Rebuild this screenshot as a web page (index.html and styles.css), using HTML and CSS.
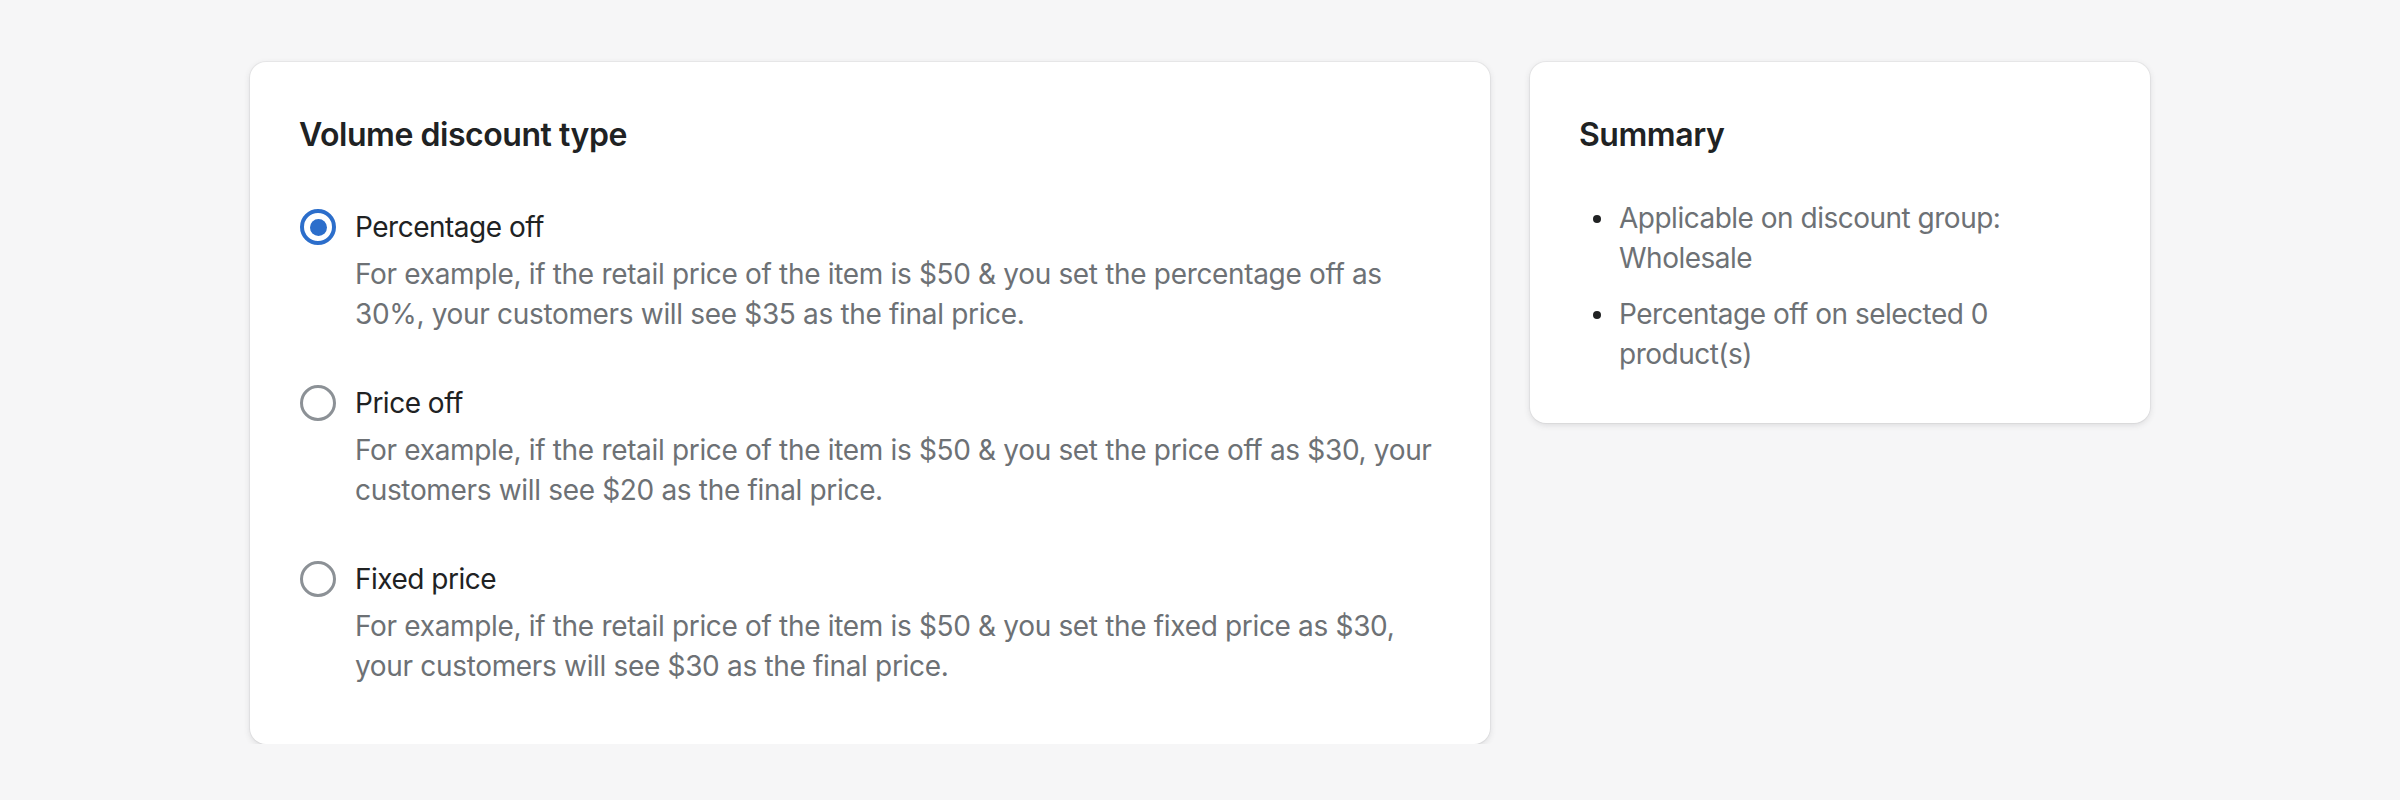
FILE: index.html
```html
<!DOCTYPE html>
<html lang="en">
<head>
<meta charset="utf-8">
<title>Volume discount type</title>
<link rel="stylesheet" href="styles.css">
</head>
<body>
<div class="page">
  <section class="card card-main">
    <h2 class="card-title">Volume discount type</h2>
    <ul class="choices">
      <li class="choice">
        <span class="radio radio-checked"><span class="radio-dot"></span></span>
        <span class="choice-label">Percentage off</span>
        <p class="choice-help">For example, if the retail price of the item is $50 &amp; you set the percentage off as 30%, your customers will see $35 as the final price.</p>
      </li>
      <li class="choice">
        <span class="radio"></span>
        <span class="choice-label">Price off</span>
        <p class="choice-help">For example, if the retail price of the item is $50 &amp; you set the price off as $30, your customers will see $20 as the final price.</p>
      </li>
      <li class="choice">
        <span class="radio"></span>
        <span class="choice-label">Fixed price</span>
        <p class="choice-help">For example, if the retail price of the item is $50 &amp; you set the fixed price as $30, your customers will see $30 as the final price.</p>
      </li>
    </ul>
  </section>
  <aside class="card card-side">
    <h2 class="card-title">Summary</h2>
    <ul class="summary">
      <li class="summary-item">Applicable on discount group: Wholesale</li>
      <li class="summary-item">Percentage off on selected 0 product(s)</li>
    </ul>
  </aside>
</div>
</body>
</html>
```

FILE: styles.css
```css
* { box-sizing: border-box; }

html, body {
  margin: 0;
  padding: 0;
  background: #f6f6f7;
  font-family: Inter, "Noto Sans", "Liberation Sans", sans-serif;
  color: #202223;
}

.page {
  display: flex;
  justify-content: center;
  align-items: flex-start;
  gap: 40px;
  padding-top: 62px;
}

.card {
  background: #ffffff;
  border-radius: 16px;
  box-shadow: 0 0 0 1px rgba(63, 63, 68, 0.05), 0 2px 6px 0 rgba(63, 63, 68, 0.15);
}

.card-main {
  width: 1240px;
  padding: 49px 48px 58px 49px;
}

.card-side {
  width: 620px;
  padding: 49px 48px 49px 49px;
}

.card-title {
  margin: 0;
  font-size: 32px;
  line-height: 48px;
  font-weight: 600;
  color: #202223;
  letter-spacing: -0.45px;
}

.choices {
  list-style: none;
  margin: 48px 0 0;
  padding: 0;
  display: flex;
  flex-direction: column;
  gap: 49px;
}

.choice {
  display: grid;
  grid-template-columns: 36px 1fr;
  column-gap: 20px;
  row-gap: 7px;
  align-items: center;
}

.radio {
  width: 36px;
  height: 36px;
  border-radius: 50%;
  border: 3.5px solid #8c9196;
  background: #ffffff;
  display: flex;
  align-items: center;
  justify-content: center;
  margin-left: 1px;
}

.radio-checked {
  border: 4px solid #2c6ecb;
}

.radio-dot {
  width: 17px;
  height: 17px;
  border-radius: 50%;
  background: #2c6ecb;
}

.choice-label {
  font-size: 28px;
  line-height: 40px;
  color: #202223;
  letter-spacing: -0.5px;
}

.choice-help {
  grid-column: 2;
  margin: 0;
  font-size: 28px;
  line-height: 40px;
  color: #6d7175;
  letter-spacing: -0.33px;
}

.summary {
  list-style: none;
  margin: 39px 0 0;
  padding: 0;
  display: flex;
  flex-direction: column;
  gap: 16px;
}

.summary-item {
  display: flex;
  font-size: 28px;
  line-height: 40px;
  color: #6d7175;
  letter-spacing: -0.5px;
}

.summary-item::before {
  content: "";
  flex: 0 0 8px;
  width: 8px;
  height: 8px;
  border-radius: 50%;
  background: #202223;
  margin: 17px 18px 0 14px;
}
```
